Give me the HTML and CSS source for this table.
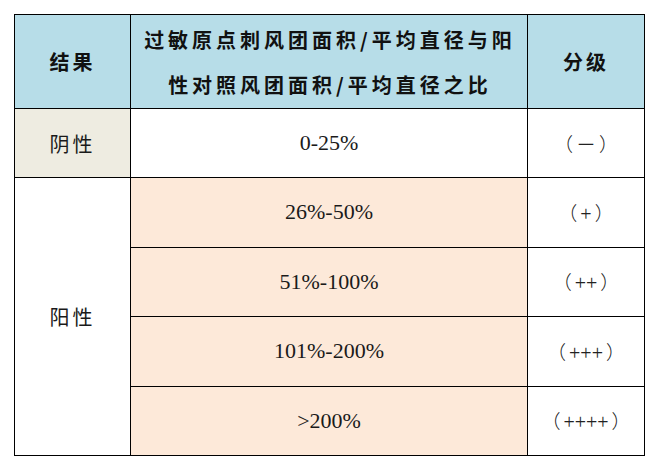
FILE: index.html
```html
<!DOCTYPE html>
<html lang="zh-CN">
<head>
<meta charset="utf-8">
<title>过敏原点刺分级</title>
<link rel="stylesheet" href="styles.css">
</head>
<body>
<table class="grade-table">
  <colgroup>
    <col class="col-result">
    <col class="col-ratio">
    <col class="col-grade">
  </colgroup>
  <thead>
    <tr class="row-head">
      <th>结果</th>
      <th class="head-ratio">过敏原点刺风团面积/平均直径与阳<br>性对照风团面积/平均直径之比</th>
      <th>分级</th>
    </tr>
  </thead>
  <tbody>
    <tr class="row row-first">
      <td class="cell-label cell-neg">阴性</td>
      <td class="cell-num">0-25%</td>
      <td class="cell-grade">（<span class="signs">－</span>）</td>
    </tr>
    <tr class="row">
      <td class="cell-label" rowspan="4">阳性</td>
      <td class="cell-num cell-pos">26%-50%</td>
      <td class="cell-grade">（<span class="signs">+</span>）</td>
    </tr>
    <tr class="row">
      <td class="cell-num cell-pos">51%-100%</td>
      <td class="cell-grade">（<span class="signs">++</span>）</td>
    </tr>
    <tr class="row">
      <td class="cell-num cell-pos">101%-200%</td>
      <td class="cell-grade">（<span class="signs">+++</span>）</td>
    </tr>
    <tr class="row">
      <td class="cell-num cell-pos">&gt;200%</td>
      <td class="cell-grade">（<span class="signs">++++</span>）</td>
    </tr>
  </tbody>
</table>
</body>
</html>
```

FILE: styles.css
```css
html, body {
  background: #ffffff;
}

body {
  margin: 0;
  padding: 14px 0 0 14px;
  font-family: "Noto Sans CJK SC", sans-serif;
  color: #1a1a1a;
}

.grade-table {
  border-collapse: collapse;
  table-layout: fixed;
  width: 630px;
}

.col-result { width: 116px; }
.col-ratio { width: 397px; }
.col-grade { width: 117px; }

.grade-table th,
.grade-table td {
  border: 1px solid #000000;
  padding: 0;
  text-align: center;
  vertical-align: middle;
}

.row-head {
  height: 94px;
}

.row-head th {
  background: #b7dde8;
  font-weight: 700;
  font-size: 20px;
  color: #111111;
  letter-spacing: 3px;
  line-height: 45px;
}

.grade-table .head-ratio {
  letter-spacing: 4px;
  padding-left: 2px;
}

.row {
  height: 69.5px;
}

.row-first {
  height: 69px;
}

.cell-label {
  font-size: 20px;
  letter-spacing: 3px;
  background: #ffffff;
}

.cell-neg {
  background: #eeece1;
}

.cell-num {
  font-family: "Liberation Serif", "Noto Sans CJK SC", serif;
  font-size: 22px;
  background: #ffffff;
}

.cell-pos {
  background: #fde9d9;
}

.cell-grade {
  font-family: "Noto Sans CJK SC", sans-serif;
  font-size: 19px;
  font-weight: 300;
  color: #222222;
  background: #ffffff;
}

.signs {
  font-family: "Liberation Serif", serif;
  font-size: 20px;
  font-weight: 400;
  margin: 0 3px;
}
```
